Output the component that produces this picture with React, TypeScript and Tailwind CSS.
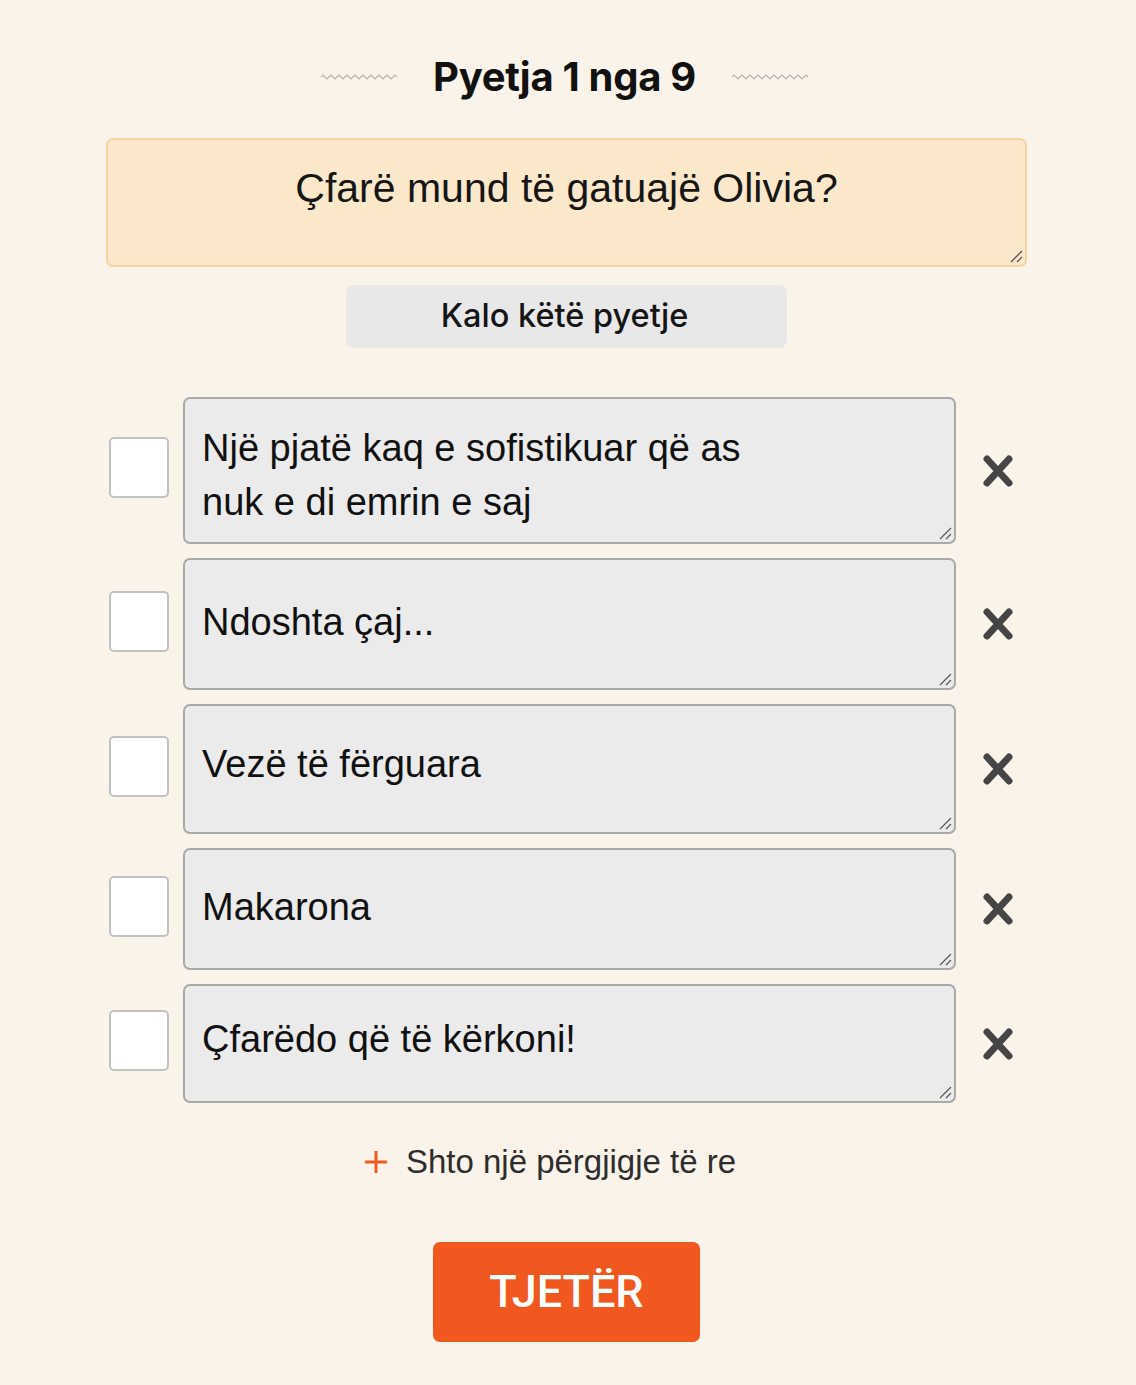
import { useState } from 'react'

type Answer = {
  id: number
  text: string
  height: string
}

const initialAnswers: Answer[] = [
  { id: 1, text: 'Një pjatë kaq e sofistikuar që as\nnuk e di emrin e saj', height: 'h-[147px] pt-[22px]' },
  { id: 2, text: 'Ndoshta çaj...', height: 'h-[132px] pt-[35px]' },
  { id: 3, text: 'Vezë të fërguara', height: 'h-[130px] pt-[31px]' },
  { id: 4, text: 'Makarona', height: 'h-[122px] pt-[30px]' },
  { id: 5, text: 'Çfarëdo që të kërkoni!', height: 'h-[119px] pt-[26px]' },
]

function Squiggle() {
  // little grey wavy rule beside the heading
  let d = 'M0 3'
  for (let i = 0; i < 19; i++) {
    d += ` L${i * 4 + 2} ${i % 2 === 0 ? 1 : 5} L${i * 4 + 4} 3`
  }
  return (
    <svg width="76" height="6" viewBox="0 0 76 6" className="shrink-0">
      <path d={d} fill="none" stroke="#b9b6b2" strokeWidth="1.2" />
    </svg>
  )
}

function ResizeGrip() {
  return (
    <svg width="16" height="16" viewBox="0 0 16 16" className="absolute right-[3px] bottom-[3px] pointer-events-none">
      <path d="M3 14 L14 3 M9 14 L14 9" stroke="#5a5a5a" strokeWidth="1.3" />
    </svg>
  )
}

function RemoveIcon() {
  return (
    <svg width="32" height="34" viewBox="0 0 32 34">
      <path d="M5 5 L27 29 M27 5 L5 29" stroke="#454545" strokeWidth="7" strokeLinecap="round" />
    </svg>
  )
}

export default function App() {
  const [answers, setAnswers] = useState(initialAnswers)

  return (
    <div className="min-h-[1385px] bg-[#f9f3e9] font-['Liberation_Sans',Arial,sans-serif]">
      <div className="w-[921px] ml-[106px] pt-[53px] flex flex-col">
        {/* Heading */}
        <div className="flex items-center justify-center gap-[36px] pr-[4px]">
          <Squiggle />
          <h1 className="font-['Inter',sans-serif] font-bold text-[40px] leading-[48px] text-[#111] tracking-[-0.3px]">
            Pyetja 1 nga 9
          </h1>
          <Squiggle />
        </div>

        {/* Question */}
        <div className="relative mt-[37px]">
          <textarea
            readOnly
            defaultValue="Çfarë mund të gatuajë Olivia?"
            className="block h-[129px] w-full resize-none bg-[#fbe8cb] border-2 border-[#f4d2a1] rounded-[7px] text-center text-[41px] leading-[44px] text-[#161616] pt-[26px] px-4 overflow-hidden outline-none"
          />
          <ResizeGrip />
        </div>

        <button
          type="button"
          className="mt-[18px] mx-auto w-[441px] h-[63px] bg-[#e8e8e8] rounded-[8px] font-['Inter',sans-serif] font-medium text-[32.5px] text-[#151515] pr-[4px]"
        >
          Kalo këtë pyetje
        </button>

        {/* Answers */}
        <div className="mt-[49px] flex flex-col gap-[14px]">
          {answers.map((a) => (
            <div key={a.id} className="flex items-center pl-[3px]">
              <input
                type="checkbox"
                className="appearance-none shrink-0 w-[60px] h-[61px] mb-[6px] bg-white border-2 border-[#c2c2c2] rounded-[5px]"
              />
              <div className="relative ml-[14px] shrink-0">
                <textarea
                  readOnly
                  defaultValue={a.text}
                  className={`block w-[773px] ${a.height} resize-none bg-[#ebebeb] border-2 border-[#a9a9a9] rounded-[7px] text-[38px] leading-[54px] text-[#111] pl-[17px] pr-4 overflow-hidden outline-none`}
                />
                <ResizeGrip />
              </div>
              <button
                type="button"
                onClick={() => setAnswers(answers.filter((x) => x.id !== a.id))}
                className="ml-[26px] flex items-center justify-center"
              >
                <RemoveIcon />
              </button>
            </div>
          ))}
        </div>

        {/* Add answer */}
        <button type="button" className="mt-[41px] mx-auto flex items-center gap-[17px] h-[36px] pr-[34px]">
          <svg width="26" height="26" viewBox="0 0 26 26">
            <path d="M13 2 V24 M2 13 H24" stroke="#f05a22" strokeWidth="3" />
          </svg>
          <span className="text-[33px] leading-[36px] text-[#2d2d2d]">Shto një përgjigje të re</span>
        </button>

        <button
          type="button"
          className="mt-[62px] mx-auto w-[267px] h-[100px] bg-[#f0581f] rounded-[7px] font-['Roboto',sans-serif] font-medium text-[45px] text-white"
        >
          TJETËR
        </button>
      </div>
    </div>
  )
}
